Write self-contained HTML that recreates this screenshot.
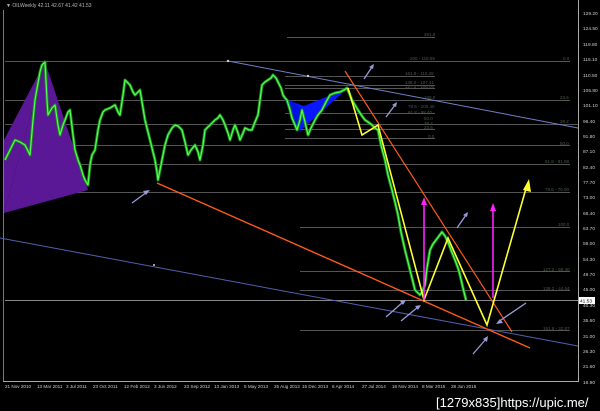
<!DOCTYPE html>
<html><head><meta charset="utf-8"><style>
html,body{margin:0;padding:0;background:#000;width:600px;height:411px;overflow:hidden}
svg{display:block}
text{font-family:"Liberation Sans",sans-serif}
</style></head><body>
<svg width="600" height="411" viewBox="0 0 600 411" xmlns="http://www.w3.org/2000/svg">
<rect width="600" height="411" fill="#000"/>
<line x1="3.5" y1="10" x2="3.5" y2="381" stroke="#777" stroke-width="1"/>
<line x1="578.5" y1="0" x2="578.5" y2="382" stroke="#aaa" stroke-width="1"/>
<line x1="3" y1="381.5" x2="579" y2="381.5" stroke="#aaa" stroke-width="1"/>
<g stroke="#555" stroke-width="1">
<line x1="287" y1="37.5" x2="435" y2="37.5"/>
<line x1="5" y1="61.5" x2="570" y2="61.5"/>
<line x1="285" y1="76.5" x2="435" y2="76.5"/>
<line x1="285" y1="85.5" x2="435" y2="85.5"/>
<line x1="285" y1="88.5" x2="435" y2="88.5"/>
<line x1="5" y1="100.5" x2="570" y2="100.5"/>
<line x1="285" y1="113.5" x2="435" y2="113.5"/>
<line x1="5" y1="124.5" x2="578" y2="124.5"/>
<line x1="285" y1="129.5" x2="435" y2="129.5"/>
<line x1="285" y1="138.5" x2="435" y2="138.5"/>
<line x1="5" y1="145.5" x2="570" y2="145.5"/>
<line x1="5" y1="164.5" x2="570" y2="164.5"/>
<line x1="5" y1="192.5" x2="570" y2="192.5"/>
<line x1="300" y1="227.5" x2="570" y2="227.5"/>
<line x1="300" y1="271.5" x2="570" y2="271.5"/>
<line x1="300" y1="290.5" x2="570" y2="290.5"/>
<line x1="5" y1="300.5" x2="578" y2="300.5" stroke="#888"/>
<line x1="300" y1="330.5" x2="570" y2="330.5"/>
</g>
<g fill="#4a5a4a" font-size="4.5">
<text x="424" y="36">261.8</text>
<text x="410" y="60">200 - 118.65</text>
<text x="563" y="60">0.0</text>
<text x="405" y="75">161.8 - 110.28</text>
<text x="405" y="84">138.2 - 107.41</text>
<text x="405" y="88">127.2 - 106.06</text>
<text x="424" y="99">100.0</text>
<text x="560" y="99">23.6</text>
<text x="408" y="108">78.6 - 100.40</text>
<text x="408" y="114">61.8 - 98.40</text>
<text x="424" y="120">50.0</text>
<text x="424" y="125">38.2</text>
<text x="424" y="129">23.6</text>
<text x="428" y="138">0.0</text>
<text x="560" y="123">38.2</text>
<text x="560" y="145">50.0</text>
<text x="545" y="163">61.8 - 81.08</text>
<text x="545" y="191">78.6 - 75.00</text>
<text x="558" y="226">100.0</text>
<text x="543" y="271">127.2 - 50.40</text>
<text x="543" y="290">138.2 - 44.64</text>
<text x="543" y="330">161.8 - 32.87</text>
</g>
<polygon points="4,213 45,62 88,190" fill="#5b1896"/>
<polygon points="4,213 4,140 45,62" fill="#5b1896"/>
<polygon points="284,99 304,106 348,88 300,131" fill="#0a16ff"/>
<polygon points="290,100 303,110 298,133" fill="#0010e0"/>
<line x1="228" y1="61" x2="578" y2="128" stroke="#7080c8" stroke-width="1"/>
<line x1="0" y1="238" x2="578" y2="346" stroke="#5060b0" stroke-width="1"/>
<circle cx="228" cy="61" r="1.2" fill="#ccd"/><circle cx="308" cy="76" r="1.2" fill="#ccd"/>
<circle cx="154" cy="265" r="1" fill="#ccd"/>
<line x1="157" y1="183" x2="530" y2="348" stroke="#ff5a1a" stroke-width="1.4"/>
<line x1="345" y1="71" x2="512" y2="332" stroke="#ff5a1a" stroke-width="1.2"/>
<polyline fill="none" stroke="#1a8a1a" stroke-width="3" stroke-linejoin="round" points="5,160 10,150 15,140 20,142 25,145 30,155 33,120 35,100 40,72 42,65 45,62 47,100 48,115 52,108 55,105 58,125 60,135 63,125 65,120 68,112 70,110 73,135 75,150 78,160 80,165 83,175 85,180 88,185 90,165 92,155 95,150 98,130 100,120 103,112 105,110 110,108 115,105 118,112 120,115 123,95 125,80 128,83 130,85 133,92 135,95 138,92 140,90 143,108 145,120 148,132 150,140 153,152 155,160 157,172 158,180 160,170 162,160 165,145 168,135 172,128 175,125 178,126 182,130 185,142 188,155 191,150 195,145 198,152 200,160 203,145 205,130 210,125 215,120 218,118 220,115 223,120 225,125 228,133 230,140 233,130 235,125 238,133 240,140 243,133 245,128 249,130 252,130 255,122 258,115 260,100 262,85 265,82 268,80 271,78 273,75 276,78 278,82 281,88 283,95 285,98 287,100 290,110 292,118 295,125 297,130 300,120 302,110 305,122 308,135 311,128 315,120 318,115 322,110 326,102 330,95 335,93 340,92 344,90 347,88 350,95 352,100 355,105 358,110 362,116 365,120 368,122 372,125 375,128 378,130 381,145 385,160 388,175 392,190 395,202 398,215 401,232 405,250 408,262 410,270 413,282 415,290 418,293 420,295 422,292 425,285 427,268 430,250 433,244 436,240 439,236 442,232 445,236 448,242 451,250 455,260 458,268 460,275 463,288 466,300"/>
<polyline fill="none" stroke="#55ff55" stroke-width="1.2" stroke-linejoin="round" points="5,160 10,150 15,140 20,142 25,145 30,155 33,120 35,100 40,72 42,65 45,62 47,100 48,115 52,108 55,105 58,125 60,135 63,125 65,120 68,112 70,110 73,135 75,150 78,160 80,165 83,175 85,180 88,185 90,165 92,155 95,150 98,130 100,120 103,112 105,110 110,108 115,105 118,112 120,115 123,95 125,80 128,83 130,85 133,92 135,95 138,92 140,90 143,108 145,120 148,132 150,140 153,152 155,160 157,172 158,180 160,170 162,160 165,145 168,135 172,128 175,125 178,126 182,130 185,142 188,155 191,150 195,145 198,152 200,160 203,145 205,130 210,125 215,120 218,118 220,115 223,120 225,125 228,133 230,140 233,130 235,125 238,133 240,140 243,133 245,128 249,130 252,130 255,122 258,115 260,100 262,85 265,82 268,80 271,78 273,75 276,78 278,82 281,88 283,95 285,98 287,100 290,110 292,118 295,125 297,130 300,120 302,110 305,122 308,135 311,128 315,120 318,115 322,110 326,102 330,95 335,93 340,92 344,90 347,88 350,95 352,100 355,105 358,110 362,116 365,120 368,122 372,125 375,128 378,130 381,145 385,160 388,175 392,190 395,202 398,215 401,232 405,250 408,262 410,270 413,282 415,290 418,293 420,295 422,292 425,285 427,268 430,250 433,244 436,240 439,236 442,232 445,236 448,242 451,250 455,260 458,268 460,275 463,288 466,300"/>
<polyline fill="none" stroke="#ffff33" stroke-width="1.6" stroke-linejoin="miter" points="348,88 362,135 378,125 424,300 448,238 487,325 527,185"/>
<polygon points="529,179 523,190 531,192" fill="#ffff33"/>
<g stroke="#ff22ff" stroke-width="1.6"><line x1="424" y1="300" x2="424" y2="204"/><line x1="493" y1="298" x2="493" y2="210"/></g>
<polygon points="424,197 421,205 427,205" fill="#ff22ff"/>
<polygon points="493,203 490,211 496,211" fill="#ff22ff"/>
<g stroke="#9a9ad8" stroke-width="1.3">
<line x1="132" y1="203" x2="147" y2="192"/>
<line x1="364" y1="79" x2="372" y2="67"/>
<line x1="386" y1="117" x2="395" y2="105"/>
<line x1="386" y1="317" x2="403" y2="302"/>
<line x1="401" y1="321" x2="418" y2="307"/>
<line x1="457" y1="228" x2="466" y2="215"/>
<line x1="473" y1="354" x2="486" y2="339"/>
<line x1="498" y1="322" x2="526" y2="303"/>
</g>
<g fill="#9a9ad8">
<polygon points="150,190 143,191 146,195"/>
<polygon points="374,64 369,67 373,69"/>
<polygon points="397,102 392,105 396,107"/>
<polygon points="406,300 400,301 403,305"/>
<polygon points="421,305 415,306 418,310"/>
<polygon points="468,212 463,215 467,217"/>
<polygon points="488,336 483,339 487,342"/>
<polygon points="496,324 503,323 500,319"/>
</g>
<text x="6" y="7" fill="#bbb" font-size="5">▼ OILWeekly  42.11 42.67 41.42 41.53</text>
<g fill="#ccc" font-size="4.8">
<text x="583" y="15">129.20</text><text x="583" y="30">124.50</text><text x="583" y="46">119.80</text>
<text x="583" y="61">115.10</text><text x="583" y="77">110.50</text><text x="583" y="92">105.80</text>
<text x="583" y="107">101.10</text><text x="583" y="123">96.40</text><text x="583" y="138">91.80</text>
<text x="583" y="153">87.10</text><text x="583" y="169">82.40</text><text x="583" y="184">77.70</text>
<text x="583" y="199">73.00</text><text x="583" y="215">68.40</text><text x="583" y="230">63.70</text>
<text x="583" y="245">59.00</text><text x="583" y="261">54.30</text><text x="583" y="276">49.70</text>
<text x="583" y="291">45.00</text><text x="583" y="322">35.60</text>
<text x="583" y="338">31.00</text><text x="583" y="353">26.30</text><text x="583" y="368">21.60</text><text x="583" y="384">16.90</text>
</g>
<rect x="579" y="297" width="16" height="7" fill="#fff"/>
<text x="580" y="302.5" fill="#000" font-size="4.8">41.53</text>
<text x="583" y="307" fill="#ccc" font-size="4.8">40.30</text>
<g fill="#ccc" font-size="4.6">
<text x="5" y="388">21 Nov 2010</text><text x="37" y="388">13 Mar 2011</text><text x="66" y="388">3 Jul 2011</text>
<text x="93" y="388">23 Oct 2011</text><text x="124" y="388">12 Feb 2012</text><text x="154" y="388">3 Jun 2012</text>
<text x="184" y="388">23 Sep 2012</text><text x="214" y="388">13 Jan 2013</text><text x="244" y="388">5 May 2013</text>
<text x="274" y="388">25 Aug 2013</text><text x="302" y="388">15 Dec 2013</text><text x="332" y="388">6 Apr 2014</text>
<text x="362" y="388">27 Jul 2014</text><text x="392" y="388">16 Nov 2014</text><text x="422" y="388">8 Mar 2015</text>
<text x="451" y="388">28 Jun 2015</text>
</g>
<text x="436" y="407" fill="#fff" font-size="13" font-family="Liberation Mono, monospace">[1279x835]https://upic.me/</text>
</svg>
</body></html>
